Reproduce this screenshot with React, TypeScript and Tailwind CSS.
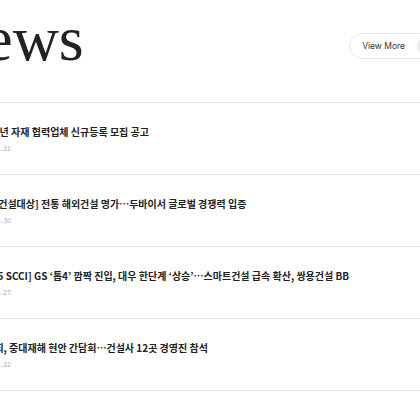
import React from "react";

const rows = [
  { title: "2025년 자재 협력업체 신규등록 모집 공고", date: "2025.01.31" },
  { title: "[한국건설대상] 전통 해외건설 명가…두바이서 글로벌 경쟁력 입증", date: "2025.01.30" },
  { title: "[2025 SCCI] GS ‘톱4’ 깜짝 진입, 대우 한단계 ‘상승’…스마트건설 급속 확산, 쌍용건설 BB", date: "2025.01.27" },
  { title: "건협회, 중대재해 현안 간담회…건설사 12곳 경영진 참석", date: "2025.01.22" },
];

export default function App() {
  return (
    <div className="w-[420px] h-[420px] overflow-hidden bg-white relative">
      <div className="h-[102px] flex items-start">
        <h1
          className="ml-[-62px] mt-[7px] text-[64px] leading-none text-[#222] font-normal whitespace-nowrap"
          style={{ fontFamily: '"Liberation Serif", "DejaVu Serif", serif' }}
        >
          News
        </h1>
        <div
          className="ml-auto mr-[-74px] mt-[33px] h-[26px] flex items-center border border-[#e6e6e6] rounded-full pl-[12px] pr-[2px] gap-[12px]"
          style={{ fontFamily: 'Inter, "Noto Sans", sans-serif' }}
        >
          <span className="text-[8.5px] text-[#333] whitespace-nowrap">View More</span>
          <span className="w-[22px] h-[22px] rounded-full bg-[#ececec]" />
          <span className="w-[40px]" />
        </div>
      </div>
      <div
        className="ml-[-24px] w-[520px]"
        style={{ fontFamily: '"Noto Sans CJK KR", "Noto Sans", sans-serif' }}
      >
        {rows.map((r) => (
          <div key={r.date} className="h-[72px] border-t-[1.5px] border-[#e6e6e6] pt-[22px]">
            <div className="text-[10px] leading-[14px] font-bold text-[#222] whitespace-nowrap">
              {r.title}
            </div>
            <div className="mt-[4px] text-[7px] leading-[10px] text-[#aaa]">{r.date}</div>
          </div>
        ))}
        <div className="border-t-[1.5px] border-[#e6e6e6]" />
      </div>
    </div>
  );
}
